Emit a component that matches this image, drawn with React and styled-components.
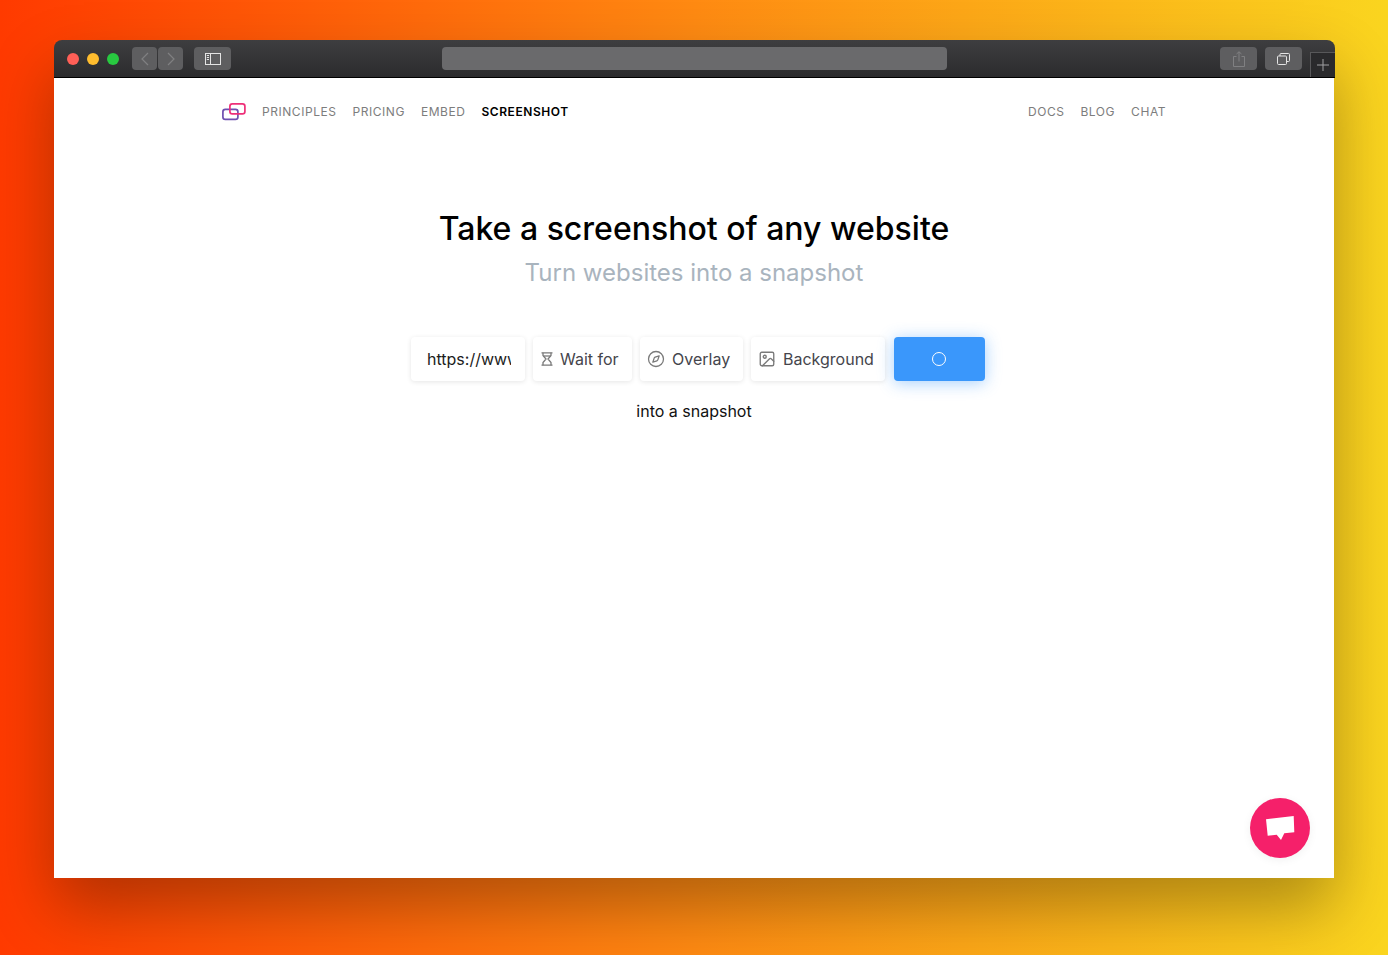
import React from "react";
import styled, { createGlobalStyle } from "styled-components";
import { Compass, Image as ImageIcon } from "lucide-react";

const GlobalStyle = createGlobalStyle`
  html, body {
    margin: 0;
    padding: 0;
    height: 100%;
  }
  body {
    font-family: Inter, "Liberation Sans", sans-serif;
    overflow: hidden;
  }
`;

const Backdrop = styled.div`
  height: 955px;
  box-sizing: border-box;
  padding-top: 40px;
  background: linear-gradient(90deg, #ff3a00 0%, #ff8a12 50%, #fad51f 100%);
`;

const Browser = styled.div`
  position: relative;
  width: 1280px;
  height: 838px;
  margin: 0 auto;
  display: flex;
  flex-direction: column;
  box-shadow: 0 30px 60px rgba(0, 0, 0, 0.3);
`;

const TitleBar = styled.div`
  height: 38px;
  flex: none;
  margin-right: -1px;
  box-sizing: border-box;
  display: grid;
  grid-template-columns: 1fr 505px 1fr;
  align-items: start;
  padding-top: 7px;
  background: linear-gradient(180deg, #3e3e40 0%, #2b2b2d 100%);
  border-bottom: 1px solid #000;
  border-radius: 8px 8px 0 0;
`;

const LeftControls = styled.div`
  display: flex;
  align-items: center;
  padding-left: 13px;
`;

const Dot = styled.span`
  width: 12px;
  height: 12px;
  border-radius: 50%;
  margin-right: ${(props) => props.after || 8}px;
  background: ${(props) => props.color};
`;

const ToolButton = styled.div`
  width: ${(props) => props.width || 37}px;
  height: 23px;
  margin-left: ${(props) => props.gap || 0}px;
  border-radius: 4px;
  background: #5e5e60;
  display: flex;
  align-items: center;
  justify-content: center;
`;

const AddressBar = styled.div`
  height: 23px;
  border-radius: 4px;
  background: #6a6a6c;
`;

const RightControls = styled.div`
  display: flex;
  justify-content: flex-end;
  align-items: flex-start;
`;

const NewTab = styled.div`
  width: 25px;
  height: 25px;
  margin: 5px 0 0 8px;
  box-sizing: border-box;
  border-left: 1px solid #58585a;
  border-top: 1px solid #58585a;
  background: #2a2a2c;
  display: flex;
  align-items: center;
  justify-content: center;
`;

const Page = styled.div`
  flex: 1;
  background: #fff;
  display: flex;
  flex-direction: column;
  align-items: center;
`;

const Nav = styled.nav`
  width: 944px;
  height: 68px;
  flex: none;
  display: flex;
  align-items: center;
  justify-content: space-between;
`;

const NavGroup = styled.div`
  display: flex;
  align-items: center;
  gap: 16px;
`;

const Logo = styled.svg`
  width: 24px;
  height: 18px;
  flex: none;
`;

const NavLink = styled.a`
  font-size: 12px;
  line-height: 16px;
  letter-spacing: 0.55px;
  text-transform: uppercase;
  color: ${(props) => (props.$active ? "#000" : "#7d7d7d")};
  font-weight: ${(props) => (props.$active ? 600 : 400)};
`;

const Title = styled.h1`
  margin: 62px 0 0;
  font-size: 32px;
  line-height: 42px;
  font-weight: 500;
  color: #000;
`;

const Subtitle = styled.h2`
  margin: 7px 0 0;
  font-size: 24px;
  line-height: 32px;
  font-weight: 400;
  color: #a9b4be;
`;

const Form = styled.div`
  margin: 48px 0 0 8px;
  display: flex;
  gap: 8px;
`;

const Field = styled.div`
  height: 44px;
  width: ${(props) => props.$width}px;
  box-sizing: border-box;
  border-radius: 4px;
  background: #fff;
  box-shadow: 0 1px 5px rgba(0, 0, 0, 0.1);
  display: flex;
  align-items: center;
  padding-left: ${(props) => props.$pad}px;
  gap: ${(props) => props.$gap || 0}px;
  font-size: 16px;
  color: #45454c;
  white-space: nowrap;
`;

const UrlInput = styled.input`
  width: 84px;
  padding: 0;
  border: 0;
  outline: 0;
  background: transparent;
  font: inherit;
  color: #1c1c1c;
`;

const FieldIcon = styled.span`
  display: flex;
  color: #7a7a7a;
`;

const Submit = styled.button`
  width: 91px;
  height: 44px;
  margin-left: 1px;
  padding: 0 1px 0 0;
  border: 0;
  border-radius: 4px;
  background: #3a97fb;
  box-shadow: 0 2px 16px rgba(58, 151, 251, 0.45);
  display: flex;
  align-items: center;
  justify-content: center;
`;

const Spinner = styled.span`
  width: 12px;
  height: 12px;
  border: 1.5px solid #fff;
  border-radius: 50%;
`;

const Caption = styled.p`
  margin: 19px 0 0;
  font-size: 16px;
  line-height: 22px;
  color: #111;
`;

const ChatButton = styled.div`
  position: absolute;
  right: 24px;
  bottom: 20px;
  width: 60px;
  height: 60px;
  border-radius: 50%;
  background: #f5206a;
  box-shadow: 0 2px 10px rgba(0, 0, 0, 0.06);
  display: flex;
  align-items: center;
  justify-content: center;
`;

export default function App() {
  return (
    <Backdrop>
      <GlobalStyle />
      <Browser>
        <TitleBar>
          <LeftControls>
            <Dot color="#ff5f57" />
            <Dot color="#ffbd2e" />
            <Dot color="#28c940" after={13} />
            <ToolButton width={25}>
              <svg width="10" height="14" viewBox="0 0 10 14" fill="none" stroke="#808082" strokeWidth="1.2">
                <path d="M8 1 L2 7 L8 13" />
              </svg>
            </ToolButton>
            <ToolButton width={25} gap={1}>
              <svg width="10" height="14" viewBox="0 0 10 14" fill="none" stroke="#808082" strokeWidth="1.2">
                <path d="M2 1 L8 7 L2 13" />
              </svg>
            </ToolButton>
            <ToolButton gap={11}>
              <svg width="16" height="12" viewBox="0 0 16 12" fill="none" stroke="#e4e4e4" strokeWidth="1">
                <rect x="0.5" y="0.5" width="15" height="11" />
                <path d="M5.5 0.5 V11.5" />
                <path d="M1.8 2.5 H4 M1.8 4.5 H4 M1.8 6.5 H4" />
              </svg>
            </ToolButton>
          </LeftControls>
          <AddressBar />
          <RightControls>
            <ToolButton>
              <svg width="12" height="16" viewBox="0 0 12 16" fill="none" stroke="#808082" strokeWidth="1">
                <path d="M3.5 5.5 H0.5 V15.5 H11.5 V5.5 H8.5" />
                <path d="M6 10.5 V0.8 M3.5 3 L6 0.8 L8.5 3" />
              </svg>
            </ToolButton>
            <ToolButton gap={8}>
              <svg width="13" height="12" viewBox="0 0 13 12" fill="none" stroke="#e4e4e4" strokeWidth="1">
                <rect x="0.5" y="3" width="9" height="8.5" rx="1" />
                <path d="M3 3 V1.5 Q3 0.5 4 0.5 H11.5 Q12.5 0.5 12.5 1.5 V7.5 Q12.5 8.5 11.5 8.5 H9.5" />
              </svg>
            </ToolButton>
            <NewTab>
              <svg width="12" height="12" viewBox="0 0 12 12" stroke="#a0a0a2" strokeWidth="1">
                <path d="M6 0 V12 M0 6 H12" />
              </svg>
            </NewTab>
          </RightControls>
        </TitleBar>
        <Page>
          <Nav>
            <NavGroup>
              <Logo viewBox="0 0 24 18" fill="none" strokeWidth="1.7">
                <rect x="0.9" y="6.3" width="15" height="10" rx="2.4" stroke="#6f4fb0" />
                <rect x="7.9" y="0.9" width="15" height="10" rx="2.4" stroke="#ee2f78" />
              </Logo>
              <NavLink>Principles</NavLink>
              <NavLink>Pricing</NavLink>
              <NavLink>Embed</NavLink>
              <NavLink $active>Screenshot</NavLink>
            </NavGroup>
            <NavGroup>
              <NavLink>Docs</NavLink>
              <NavLink>Blog</NavLink>
              <NavLink>Chat</NavLink>
            </NavGroup>
          </Nav>
          <Title>Take a screenshot of any website</Title>
          <Subtitle>Turn websites into a snapshot</Subtitle>
          <Form>
            <Field $width={114} $pad={16}>
              <UrlInput readOnly defaultValue="https://www.example.com" />
            </Field>
            <Field $width={99} $pad={8} $gap={7}>
              <FieldIcon>
                <svg width="12" height="14" viewBox="0 0 12 14" fill="none" stroke="currentColor" strokeWidth="1.3">
                  <path d="M0.5 0.8 H11.5 M0.5 13.2 H11.5" />
                  <path d="M2 0.8 V3.5 L5 7 L2 10.5 V13.2 M10 0.8 V3.5 L7 7 L10 10.5 V13.2" />
                  <path d="M2.5 4 H9.5" />
                </svg>
              </FieldIcon>
              Wait for
            </Field>
            <Field $width={103} $pad={7} $gap={7}>
              <FieldIcon><Compass size={18} strokeWidth={1.7} /></FieldIcon>
              Overlay
            </Field>
            <Field $width={134} $pad={7} $gap={7}>
              <FieldIcon><ImageIcon size={18} strokeWidth={1.8} /></FieldIcon>
              Background
            </Field>
            <Submit aria-label="Take screenshot">
              <Spinner />
            </Submit>
          </Form>
          <Caption>into a snapshot</Caption>
        </Page>
        <ChatButton>
          <svg width="29" height="24" viewBox="0 0 29 24" fill="#fff">
            <path d="M0 3.3 L27.7 0 L28.3 16.3 L18.3 17.3 L15 24 L10.7 18.7 L1.7 19.7 Z" />
          </svg>
        </ChatButton>
      </Browser>
    </Backdrop>
  );
}
